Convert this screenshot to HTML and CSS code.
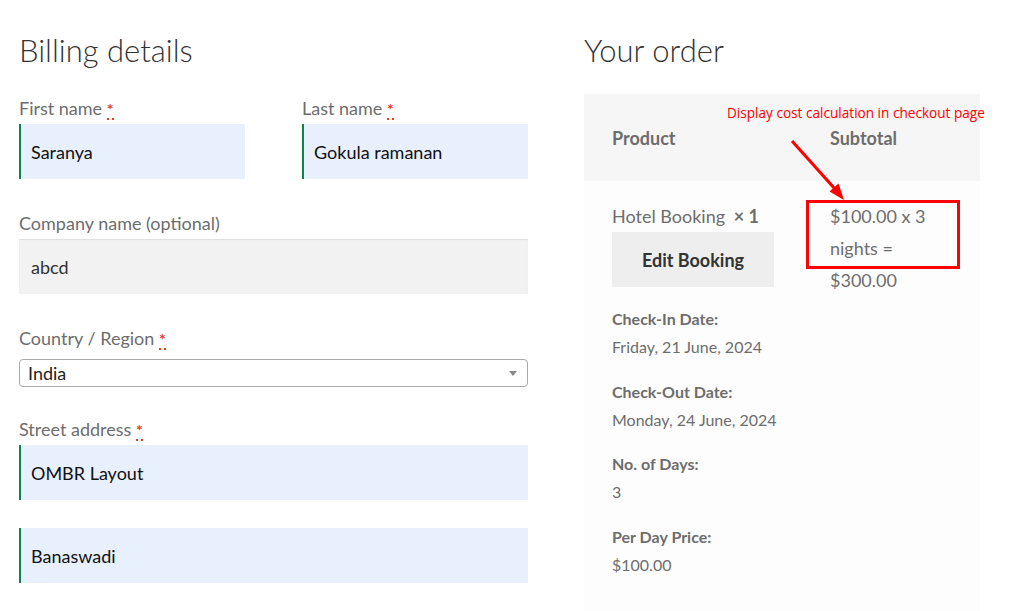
FILE: index.html
```html
<!DOCTYPE html>
<html lang="en">
<head>
  <meta charset="UTF-8" />
  <title>Checkout</title>
  <link rel="stylesheet" href="styles.css">
</head>
<body>

  <div class="page">
    <div class="billing">
      <h2 class="section-title">Billing details</h2>

      <div class="row-half">
        <div class="field">
          <label>First name <abbr class="required" title="required">*</abbr></label>
          <input type="text" class="input-text autofill" value="Saranya" />
        </div>
        <div class="field">
          <label>Last name <abbr class="required" title="required">*</abbr></label>
          <input type="text" class="input-text autofill" value="Gokula ramanan" />
        </div>
      </div>

      <div class="field">
        <label>Company name (optional)</label>
        <input type="text" class="input-text plain" value="abcd" />
      </div>

      <div class="field field-select">
        <label>Country / Region <abbr class="required" title="required">*</abbr></label>
        <div class="select-box">
          <span>India</span>
          <span class="select-arrow"></span>
        </div>
      </div>

      <div class="field field-street">
        <label>Street address <abbr class="required" title="required">*</abbr></label>
        <input type="text" class="input-text autofill" value="OMBR Layout" />
        <input type="text" class="input-text autofill second" value="Banaswadi" />
      </div>
    </div>

    <div class="order">
      <h2 class="section-title">Your order</h2>

      <div class="order-table">
        <div class="order-head">
          <div class="col-product">Product</div>
          <div class="col-total">Subtotal</div>
        </div>
        <div class="order-body">
          <div class="col-product">
            <div class="product-name">Hotel Booking <strong>&times;&nbsp;1</strong></div>
            <button class="edit-btn">Edit Booking</button>
            <dl class="meta">
              <dt>Check-In Date:</dt>
              <dd>Friday, 21 June, 2024</dd>
              <dt>Check-Out Date:</dt>
              <dd>Monday, 24 June, 2024</dd>
              <dt>No. of Days:</dt>
              <dd>3</dd>
              <dt>Per Day Price:</dt>
              <dd>$100.00</dd>
            </dl>
          </div>
          <div class="col-total subtotal">$100.00 x 3 nights = $300.00</div>
        </div>
      </div>
    </div>

    <!-- annotation on the screenshot -->
    <div class="note">Display cost calculation in checkout page</div>
    <svg class="note-marks" width="1024" height="611" viewBox="0 0 1024 611">
      <line x1="792" y1="141" x2="835" y2="189" stroke="#ff0000" stroke-width="3" />
      <polygon points="844,200 829.5,191.5 838.5,183.5" fill="#ff0000" />
      <rect x="807.5" y="201.5" width="151" height="66" fill="none" stroke="#ff0000" stroke-width="3" />
    </svg>
  </div>

</body>
</html>
```

FILE: styles.css
```css
body {
  margin: 0;
  background: #ffffff;
  font-family: 'Lato', 'Open Sans', sans-serif;
  color: #6d6d6d;
}

.page {
  position: relative;
  display: flex;
  gap: 56px;
  padding-left: 19px;
  height: 611px;
  overflow: hidden;
}

.section-title {
  margin: 26px 0 0;
  font-size: 31px;
  line-height: 48px;
  font-weight: 300;
  color: #333333;
}

/* billing form */
.billing {
  width: 509px;
}

.row-half {
  display: flex;
  gap: 57px;
  margin-top: 20px;
}

.row-half .field {
  width: 226px;
  margin-top: 0;
}

.field {
  margin-top: 30px;
}

.field label {
  display: block;
  font-size: 18px;
  line-height: 28px;
  margin-bottom: 2px;
  color: #6d6d6d;
}

.required {
  color: #e2401c;
  text-decoration: none;
  border-bottom: 2px dotted #e2401c;
  font-weight: 700;
  font-size: 16px;
  line-height: 1;
}

.input-text {
  display: block;
  box-sizing: border-box;
  width: 100%;
  height: 55px;
  padding: 0 12px;
  border: none;
  outline: none;
  font-family: inherit;
  font-size: 18px;
  color: #111111;
}

.autofill {
  background: #e8f0fe;
  border-left: 2px solid #0f834d;
  padding-left: 10px;
}

.plain {
  background: #f2f2f2;
  color: #333333;
  box-shadow: inset 0 1px 1px rgba(0,0,0,0.08);
}

.second {
  margin-top: 28px;
}

.field-select {
  margin-top: 30px;
}

.field-select label {
  margin-bottom: 7px;
}

.select-box {
  display: flex;
  align-items: center;
  justify-content: space-between;
  box-sizing: border-box;
  height: 28px;
  padding: 0 8px;
  border: 1px solid #aaaaaa;
  border-radius: 4px;
  font-size: 18px;
  color: #222222;
}

.select-arrow {
  width: 0;
  height: 0;
  border-left: 4px solid transparent;
  border-right: 4px solid transparent;
  border-top: 5px solid #888888;
  margin-right: 2px;
}

.field-street {
  margin-top: 28px;
}

/* order review */
.order {
  width: 396px;
}

.order-table {
  margin-top: 20px;
}

.order-head {
  display: flex;
  height: 87px;
  align-items: center;
  background: #f6f6f6;
  font-size: 18px;
  font-weight: 700;
  color: #6d6d6d;
}

.col-product {
  width: 218px;
  padding-left: 28px;
}

.col-total {
  width: 122px;
}

.order-body {
  display: flex;
  align-items: flex-start;
  background: #fdfdfd;
  padding-top: 19px;
  height: 500px;
  font-size: 18px;
  color: #6d6d6d;
}

.product-name {
  line-height: 32px;
}

.product-name strong {
  margin-left: 4px;
}

.edit-btn {
  display: block;
  width: 162px;
  height: 55px;
  border: none;
  background: #eeeeee;
  font-family: inherit;
  font-size: 18px;
  font-weight: 700;
  color: #333333;
}

.meta {
  margin: 18px 0 0;
  font-size: 16px;
  line-height: 28px;
}

.meta dt {
  font-weight: 700;
}

.meta dd {
  margin: 0 0 16.5px;
}

.subtotal {
  line-height: 32px;
}

.note {
  position: absolute;
  left: 727px;
  top: 103px;
  font-family: 'Open Sans', sans-serif;
  font-size: 13.6px;
  color: #ff0000;
  white-space: nowrap;
}

.note-marks {
  position: absolute;
  left: 0;
  top: 0;
  pointer-events: none;
}
```
